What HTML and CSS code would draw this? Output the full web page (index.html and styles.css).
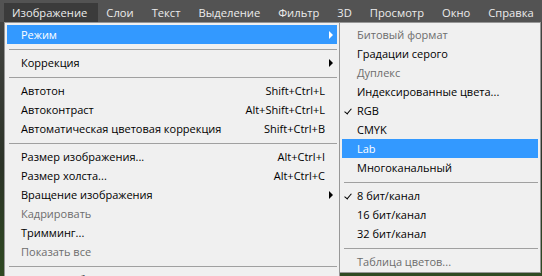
FILE: index.html
```html
<!DOCTYPE html>
<html lang="ru">
<head>
    <meta charset="UTF-8">
    <title>Изображение</title>
    <link rel="stylesheet" href="styles.css">
</head>
<body>
    <div class="menubar">
        <span class="menubar-item active">Изображение</span>
        <span class="menubar-item">Слои</span>
        <span class="menubar-item">Текст</span>
        <span class="menubar-item">Выделение</span>
        <span class="menubar-item">Фильтр</span>
        <span class="menubar-item">3D</span>
        <span class="menubar-item">Просмотр</span>
        <span class="menubar-item">Окно</span>
        <span class="menubar-item">Справка</span>
    </div>

    <div class="menus">
        <div class="menu main-menu">
            <div class="item hover"><span>Режим</span><i class="arrow"></i></div>
            <div class="sep"></div>
            <div class="item"><span>Коррекция</span><i class="arrow"></i></div>
            <div class="sep"></div>
            <div class="item"><span>Автотон</span><span class="key">Shift+Ctrl+L</span></div>
            <div class="item"><span>Автоконтраст</span><span class="key">Alt+Shift+Ctrl+L</span></div>
            <div class="item"><span>Автоматическая цветовая коррекция</span><span class="key">Shift+Ctrl+B</span></div>
            <div class="sep"></div>
            <div class="item"><span>Размер изображения...</span><span class="key">Alt+Ctrl+I</span></div>
            <div class="item"><span>Размер холста...</span><span class="key">Alt+Ctrl+C</span></div>
            <div class="item"><span>Вращение изображения</span><i class="arrow"></i></div>
            <div class="item disabled"><span>Кадрировать</span></div>
            <div class="item"><span>Тримминг...</span></div>
            <div class="item disabled"><span>Показать все</span></div>
            <div class="sep"></div>
            <div class="item"><span>Создать дубликат...</span></div>
        </div>

        <div class="menu sub-menu">
            <div class="item disabled">Битовый формат</div>
            <div class="item">Градации серого</div>
            <div class="item disabled">Дуплекс</div>
            <div class="item">Индексированные цвета...</div>
            <div class="item checked">RGB</div>
            <div class="item">CMYK</div>
            <div class="item hover">Lab</div>
            <div class="item">Многоканальный</div>
            <div class="sep"></div>
            <div class="item checked">8 бит/канал</div>
            <div class="item">16 бит/канал</div>
            <div class="item">32 бит/канал</div>
            <div class="sep"></div>
            <div class="item disabled">Таблица цветов...</div>
        </div>
    </div>
</body>
</html>
```

FILE: styles.css
```css
body {
    margin: 0;
    height: 276px;
    overflow: hidden;
    background: linear-gradient(#464646, #2c3327 60%, #2f4a22);
    font-family: "Open Sans", "Noto Sans", sans-serif;
}
.menubar {
    display: flex;
    height: 22px;
    padding: 3px 0 0 4px;
    box-sizing: border-box;
    background-color: #535353;
    color: #ececec;
    font-size: 11.2px;
    white-space: nowrap;
}
.menubar-item {
    padding: 0 10px 0 8px;
    line-height: 19px;
}
.menubar-item.active {
    background-color: #3b3b3b;
    padding-right: 11px;
}
.menus {
    display: flex;
    align-items: flex-start;
    padding-left: 4px;
    height: 254px;
    overflow: hidden;
}
.menu {
    background-color: #f0f0f0;
    border: 1px solid #979797;
    padding: 2px;
    font-size: 11px;
    color: #000;
}
.main-menu {
    width: 330px;
}
.sub-menu {
    width: 196px;
    margin-left: -1px;
    padding-bottom: 1px;
}
.item {
    display: flex;
    align-items: center;
    justify-content: space-between;
    height: 19px;
    padding: 0 12px 0 14px;
    white-space: nowrap;
}
.sub-menu .item {
    position: relative;
    padding-left: 15px;
    justify-content: flex-start;
}
.item.hover {
    background-color: #3399ff;
    color: #fff;
}
.item.disabled {
    color: #6d6d6d;
}
.item.checked::before {
    content: "";
    position: absolute;
    left: 4px;
    top: 6px;
    width: 3px;
    height: 6px;
    border-right: 1.5px solid #000;
    border-bottom: 1.5px solid #000;
    transform: rotate(40deg);
}
.arrow {
    width: 0;
    height: 0;
    border-top: 4px solid transparent;
    border-bottom: 4px solid transparent;
    border-left: 4px solid #000;
    margin-right: -8px;
}
.hover .arrow {
    border-left-color: #fff;
}
.sep {
    height: 1px;
    margin: 5px 0 3px 2px;
    background-color: #a0a0a0;
}
```
